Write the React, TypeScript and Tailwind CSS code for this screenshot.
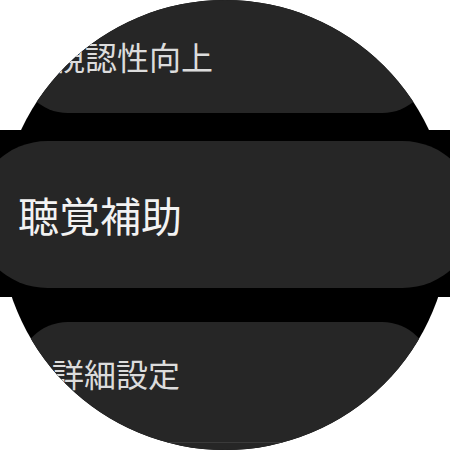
import React from "react";

const font = { fontFamily: '"Noto Sans CJK JP", "Noto Sans", sans-serif' };

export default function App() {
  return (
    <div className="relative w-[450px] h-[450px] bg-white overflow-hidden" style={font}>
      {/* watch face */}
      <div className="w-[450px] h-[450px] rounded-full bg-black overflow-hidden flex flex-col items-center">
        <div className="-mt-[17px] h-[130px] w-[414px] shrink-0 rounded-[50px] bg-[#262626] pt-[57px] pl-[35px]">
          <span className="block text-[32px] leading-[32px] text-[#dcdcdc] whitespace-nowrap">視認性向上</span>
        </div>
        <div className="h-[209px] shrink-0" />
        <div className="h-[120px] w-[414px] shrink-0 rounded-t-[50px] bg-[#262626] pt-[35px] pl-[34px]">
          <span className="block text-[32px] leading-[32px] text-[#dcdcdc] whitespace-nowrap">詳細設定</span>
        </div>
        <div className="h-[60px] w-[414px] shrink-0 bg-[#262626] border-t border-[#3a3a3a]" />
      </div>

      {/* focused item, scaled past the bezel */}
      <div className="absolute left-0 top-[130px] w-[450px] h-[167px] bg-black pt-[11px]">
        <div className="-ml-[26px] w-[502px] h-[147px] rounded-full bg-[#262626] flex items-center pl-[44px]">
          <span className="block text-[41px] leading-[41px] text-[#f2f2f2] whitespace-nowrap">聴覚補助</span>
        </div>
      </div>
    </div>
  );
}
